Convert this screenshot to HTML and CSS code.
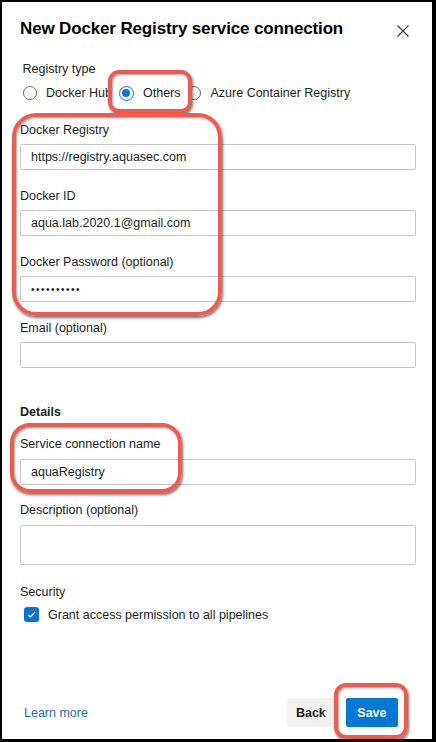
FILE: index.html
```html
<!DOCTYPE html>
<html lang="en">
<head>
<meta charset="utf-8">
<title>New Docker Registry service connection</title>
<link rel="stylesheet" href="styles.css">
</head>
<body>
<div class="panel">
  <header class="header">
    <h1 class="title">New Docker Registry service connection</h1>
    <button class="close" aria-label="Close">
      <svg width="12" height="12" viewBox="0 0 12 12"><path d="M0.5 0.5L11.5 11.5M11.5 0.5L0.5 11.5" stroke="#3b3a39" stroke-width="1.1" fill="none"/></svg>
    </button>
  </header>

  <main class="form">
    <section class="registry-type">
      <div class="label group-label">Registry type</div>
      <div class="radios">
        <label class="radio"><span class="circle"></span>Docker Hub</label>
        <label class="radio radio-others"><span class="circle checked"></span>Others</label>
        <label class="radio"><span class="circle"></span>Azure Container Registry</label>
      </div>
    </section>

    <div class="field">
      <div class="label">Docker Registry</div>
      <div class="input">https://registry.aquasec.com</div>
    </div>
    <div class="field">
      <div class="label">Docker ID</div>
      <div class="input">aqua.lab.2020.1@gmail.com</div>
    </div>
    <div class="field">
      <div class="label">Docker Password (optional)</div>
      <div class="input"><span class="dots">••••••••••</span></div>
    </div>
    <div class="field">
      <div class="label">Email (optional)</div>
      <div class="input"></div>
    </div>

    <section class="details">
      <div class="label heading">Details</div>
      <div class="field">
        <div class="label">Service connection name</div>
        <div class="input">aquaRegistry</div>
      </div>
      <div class="field field-desc">
        <div class="label">Description (optional)</div>
        <div class="input textarea"></div>
      </div>
    </section>

    <section class="security">
      <div class="label">Security</div>
      <label class="check-row">
        <span class="checkbox"><svg width="11" height="11" viewBox="0 0 11 11"><path d="M2 5.8L4.3 8L9 3" stroke="#fff" stroke-width="1.1" fill="none"/></svg></span>
        Grant access permission to all pipelines
      </label>
    </section>
  </main>

  <footer class="footer">
    <a class="link" href="#">Learn more</a>
    <div class="buttons">
      <button class="btn btn-back">Back</button>
      <button class="btn btn-save">Save</button>
    </div>
  </footer>

  <div class="mark mark-others"></div>
  <div class="mark mark-docker"></div>
  <div class="mark mark-name"></div>
  <div class="mark mark-save"></div>
</div>
</body>
</html>
```

FILE: styles.css
```css
html, body {
  margin: 0;
  background: #000;
}
body {
  padding: 2px 0 0 2px;
  height: 742px;
  box-sizing: border-box;
  overflow: hidden;
}
.panel {
  position: relative;
  width: 430px;
  height: 737px;
  background: #fff;
  box-sizing: border-box;
  padding-top: 15px;
  display: flex;
  flex-direction: column;
  font-family: "Liberation Sans", Arial, sans-serif;
  font-size: 12.5px;
  color: #201f1e;
}
.header {
  display: flex;
  justify-content: space-between;
  align-items: flex-start;
  padding: 0 23px 0 18px;
}
.title {
  margin: 0;
  font-size: 17px;
  line-height: 24px;
  font-weight: 700;
  letter-spacing: -0.15px;
  color: #000;
}
.close {
  border: 0;
  background: none;
  padding: 0;
  margin-top: 8px;
  width: 12px;
  height: 12px;
  display: block;
}
.close svg { display: block; }

.form {
  padding: 17.5px 16px 0 18px;
  display: flex;
  flex-direction: column;
}
.form > section,
.form > .field {
  display: flex;
  flex-direction: column;
}
.label {
  line-height: 20px;
}
.registry-type {
  padding-left: 2.5px;
  margin-bottom: 16.5px;
}
.group-label {
  margin-bottom: 4.5px;
}
.radios {
  display: flex;
  align-items: center;
  height: 20px;
}
.radio {
  display: flex;
  align-items: center;
  gap: 9.5px;
  margin-right: 6.5px;
  line-height: 20px;
  white-space: nowrap;
}
.circle {
  width: 14px;
  height: 14px;
  border: 1px solid #6e6d6b;
  border-radius: 50%;
  box-sizing: border-box;
  background: #fff;
  position: relative;
  flex: none;
}
.circle.checked {
  width: 15px;
  height: 15px;
  border: 1.5px solid #0a74d6;
}
.circle.checked::after {
  content: "";
  position: absolute;
  inset: 2.5px;
  background: #0a74d6;
  border-radius: 50%;
}
.radio-others {
  position: relative;
  z-index: 3;
}

.field {
  display: flex;
  flex-direction: column;
  margin-bottom: 15.5px;
}
.field .label {
  margin-bottom: 4.5px;
}
.input {
  height: 26px;
  box-sizing: border-box;
  border: 1px solid #c8c6c4;
  border-radius: 2px;
  padding: 0 10px;
  display: flex;
  align-items: center;
  color: #201f1e;
}
.textarea {
  height: 40px;
}
.dots {
  font-size: 10px;
  letter-spacing: 1.5px;
}
.details {
  margin-top: 18.5px;
}
.heading {
  font-weight: 700;
  margin-bottom: 12px;
}
.field-desc {
  margin-bottom: 17.5px;
}
.check-row {
  display: flex;
  align-items: center;
  gap: 9px;
  height: 20px;
  margin-top: 2.5px;
  padding-left: 4px;
}
.checkbox {
  width: 15px;
  height: 15px;
  background: #0a74d6;
  border-radius: 3px;
  display: flex;
  align-items: center;
  justify-content: center;
  flex: none;
}
.checkbox svg { display: block; }

.footer {
  margin-top: auto;
  padding: 0 34px 12px 22px;
  display: flex;
  align-items: center;
  justify-content: space-between;
}
.link {
  color: #1f6fbf;
  text-decoration: none;
}
.buttons {
  display: flex;
  gap: 11px;
}
.btn {
  height: 29px;
  border: 0;
  border-radius: 2px;
  font-family: "Liberation Sans", Arial, sans-serif;
  font-size: 12.5px;
  font-weight: 700;
  padding: 0 9px;
}
.btn-back {
  background: #f3f2f1;
  color: #201f1e;
}
.btn-save {
  background: #0078d4;
  color: #fff;
  padding: 0 11.5px;
}

.mark {
  position: absolute;
  box-sizing: border-box;
  border: 4px solid #f25a4f;
  box-shadow: 1px 2px 3px rgba(0,0,0,0.55), inset 1px 1px 2px rgba(0,0,0,0.35);
  pointer-events: none;
  z-index: 2;
}
.mark-others {
  left: 106px;
  top: 68px;
  width: 84px;
  height: 43px;
  border-radius: 11px;
  background: #fff;
}
.mark-docker {
  left: 10px;
  top: 111px;
  width: 210px;
  height: 203px;
  border-radius: 24px;
}
.mark-name {
  left: 8px;
  top: 421px;
  width: 172px;
  height: 70px;
  border-radius: 20px;
}
.mark-save {
  left: 332px;
  top: 681px;
  width: 74px;
  height: 56px;
  border-radius: 12px;
}
```
